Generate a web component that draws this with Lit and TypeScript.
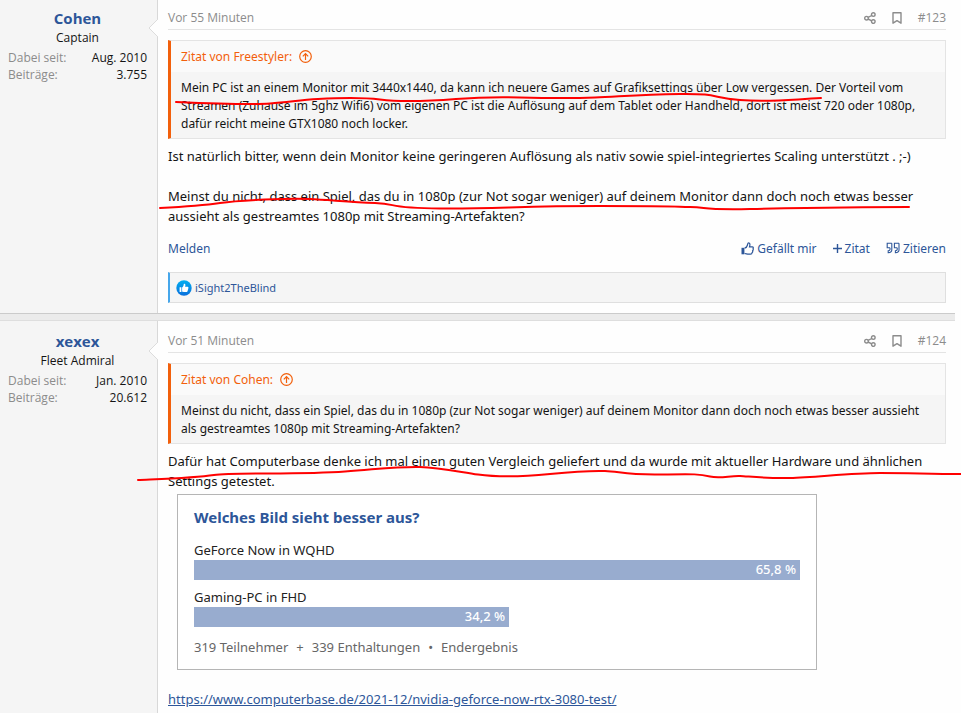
import { LitElement, html, css, svg, nothing, TemplateResult } from "lit";
import { customElement, property } from "lit/decorators.js";

const shareIcon = html`<svg class="icon" viewBox="0 0 12 12" width="12" height="12" fill="none" stroke="currentColor" stroke-width="1.4">
  <circle cx="2.5" cy="6.2" r="1.8" /><circle cx="9.3" cy="2.6" r="1.8" /><circle cx="9.3" cy="9.6" r="1.8" />
  <path d="M4.1 5.4 7.7 3.5M4.1 7 7.7 8.8" />
</svg>`;

const bookmarkIcon = html`<svg class="icon" viewBox="0 0 10 12" width="10" height="12" fill="none" stroke="currentColor" stroke-width="1.4">
  <path d="M1 .7H9V11.200L5 8.600 1 11.200Z" stroke-linejoin="round" />
</svg>`;

const jumpIcon = html`<svg class="icon" viewBox="0 0 13 13" width="13" height="13" fill="none" stroke="currentColor" stroke-width="1.2">
  <circle cx="6.5" cy="6.5" r="5.8" /><path d="M6.5 10V3.6M3.8 6.3 6.5 3.6 9.2 6.3" />
</svg>`;

const thumbIcon = html`<svg class="icon" viewBox="0 0 13 13" width="13" height="13">
  <path d="M.5 5.8H3.4V12.3H.5Z" fill="currentColor" />
  <path d="M3.6 6.2C5 5.9 6.2 4.2 6.5 3 6.7 2 6.7 .8 7.6 .8 9 .8 9.2 2.5 8.5 4.9H11.300C12.500 4.900 12.500 6.200 12 6.800 12.400 7.600 12.200 8.400 11.600 8.800 11.900 9.600 11.600 10.300 11 10.700 11 11.800 10.500 12.200 9.500 12.200H7.600C6 12.200 5 11.500 3.600 11.500" fill="none" stroke="currentColor" stroke-width="1.2" />
</svg>`;

const plusIcon = html`<svg class="icon" viewBox="0 0 9 9" width="9" height="9" fill="none" stroke="currentColor" stroke-width="1.4">
  <path d="M4.5 0V9M0 4.5H9" />
</svg>`;

const quoteIcon = html`<svg class="icon" viewBox="0 0 14 12" width="14" height="12" fill="none" stroke="currentColor" stroke-width="1.1">
  <path d="M5.8 1.2H1.2V5.8H4M5.8 1.2V8C5.8 9.8 4.8 10.5 2.2 10.7V8.8C3.6 8.7 4 8.5 4 7.5V5.8" />
  <path d="M13 1.2H8.4V5.8H11.2M13 1.2V8C13 9.8 12 10.5 9.4 10.7V8.8C10.8 8.7 11.2 8.5 11.2 7.5V5.8" />
</svg>`;

const reactionIcon = html`<svg class="icon" viewBox="0 0 16 16" width="16" height="16">
  <defs><linearGradient id="like" x1="0" y1="0" x2="0" y2="1"><stop offset="0" stop-color="#00aef0" /><stop offset="1" stop-color="#0a6fdc" /></linearGradient></defs>
  <circle cx="8" cy="8" r="7.7" fill="url(#like)" />
  <path d="M3.6 7.3H5.4V11.9H3.6ZM6.1 7.5C7.4 6.6 7.6 5.6 7.7 4.2 7.8 3.3 9.4 3.5 9.4 5 9.4 5.8 9.2 6.3 9.1 6.7H11.6C12.6 6.7 12.7 7.7 12.1 8.1 12.6 8.6 12.4 9.3 11.9 9.5 12.2 10.1 11.9 10.6 11.5 10.8 11.6 11.6 11.2 12 10.4 12H8.2C7.2 12 6.8 11.7 6.1 11.5Z" fill="#fff" />
</svg>`;

interface Post {
  user: string;
  rank: string;
  joined: string;
  messages: string;
  time: string;
  number: string;
  quoteAuthor: string;
  quote: TemplateResult;
  body: TemplateResult;
  likedBy?: string;
}

const posts: Post[] = [
  {
    user: "Cohen",
    rank: "Captain",
    joined: "Aug. 2010",
    messages: "3.755",
    time: "Vor 55 Minuten",
    number: "#123",
    quoteAuthor: "Freestyler",
    quote: html`Mein PC ist an einem Monitor mit 3440x1440, da kann ich neuere Games auf Grafiksettings über Low vergessen. Der Vorteil vom<br />Streamen (Zuhause im 5ghz Wifi6) vom eigenen PC ist die Auflösung auf dem Tablet oder Handheld, dort ist meist 720 oder 1080p,<br />dafür reicht meine GTX1080 noch locker.`,
    body: html`Ist natürlich bitter, wenn dein Monitor keine geringeren Auflösung als nativ sowie spiel-integriertes Scaling unterstützt . ;-)<br /><br />Meinst du nicht, dass ein Spiel, das du in 1080p (zur Not sogar weniger) auf deinem Monitor dann doch noch etwas besser<br />aussieht als gestreamtes 1080p mit Streaming-Artefakten?`,
    likedBy: "iSight2TheBlind",
  },
  {
    user: "xexex",
    rank: "Fleet Admiral",
    joined: "Jan. 2010",
    messages: "20.612",
    time: "Vor 51 Minuten",
    number: "#124",
    quoteAuthor: "Cohen",
    quote: html`Meinst du nicht, dass ein Spiel, das du in 1080p (zur Not sogar weniger) auf deinem Monitor dann doch noch etwas besser aussieht<br />als gestreamtes 1080p mit Streaming-Artefakten?`,
    body: html`Dafür hat Computerbase denke ich mal einen guten Vergleich geliefert und da wurde mit aktueller Hardware und ähnlichen<br />Settings getestet.`,
  },
];

@customElement("poll-result")
class PollResult extends LitElement {
  static styles = css`
    :host {
      display: block;
      box-sizing: border-box;
      max-width: 640px;
      margin: 3px 0 0 9px;
      padding: 11px 16px 12px;
      border: 1px solid #b5b5b5;
      background: #fff;
      font: 13px/20px "Noto Sans", "Open Sans", sans-serif;
      color: #222;
    }
    .title { margin: 0 0 12px; font-size: 15px; line-height: 22px; font-weight: 700; color: #2d5699; }
    .option { margin-bottom: 7px; }
    .bar {
      box-sizing: border-box;
      height: 20px;
      line-height: 18px;
      padding-right: 4px;
      background: #98accf;
      color: #fff;
      font-weight: 500;
      text-align: right;
    }
    .summary { display: flex; gap: 8px; margin-top: 10px; color: #666; }
  `;

  private options = [
    { label: "GeForce Now in WQHD", value: "65,8 %", width: 100 },
    { label: "Gaming-PC in FHD", value: "34,2 %", width: 52 },
  ];

  render() {
    return html`<h3 class="title">Welches Bild sieht besser aus?</h3>
      ${this.options.map(
        (o) => html`<div class="option">
          <div class="label">${o.label}</div>
          <div class="bar" style="width:${o.width}%">${o.value}</div>
        </div>`
      )}
      <div class="summary"><span>319 Teilnehmer</span><span>+</span><span>339 Enthaltungen</span><span>•</span><span>Endergebnis</span></div>`;
  }
}

@customElement("forum-post")
class ForumPost extends LitElement {
  @property({ attribute: false }) post!: Post;

  static styles = css`
    :host { display: flex; background: #fefefe; }
    a { color: inherit; text-decoration: none; }
    .icon { flex: none; display: block; }
    .user {
      box-sizing: border-box;
      flex: none;
      width: 158px;
      padding: 9px 10px 0 8px;
      border-right: 1px solid #d8d8d8;
      background: #f5f5f5;
      position: relative;
      font-family: "Open Sans", "Noto Sans", sans-serif;
      font-size: 12px;
      line-height: 16px;
      color: #141414;
    }
    .arrow { position: absolute; right: -1px; top: 20px; }
    .name { display: block; margin: 0 0 2px; font-size: 15px; line-height: 22px; font-weight: 700; text-align: center; color: #2d5699; }
    .rank { text-align: center; line-height: 14px; margin-bottom: 5px; }
    .facts { display: grid; grid-template-columns: auto auto; justify-content: space-between; row-gap: 1px; margin: 0; }
    .facts dt { color: #8c8c8c; }
    .facts dd { margin: 0; text-align: right; }
    .main { flex: 1; min-width: 0; padding: 8px 9px 10px 10px; }
    .head {
      display: flex;
      align-items: center;
      gap: 16px;
      height: 23px;
      border-bottom: 1px solid #e4e4e4;
      font-family: "Open Sans", "Noto Sans", sans-serif;
      font-size: 12px;
      color: #8c8c8c;
    }
    .time { flex: 1; }
    .quote { margin: 10px 0 7px; border: 1px solid #e4e4e4; border-left: 3px solid #f2600c; background: #f5f5f5; }
    .quote-title { display: flex; align-items: center; gap: 7px; height: 31px; padding-left: 10px; background: #fafafa; color: #f2600c; font-size: 12px; }
    .quote-text { margin: 0; padding: 7px 0 5px 10px; font-size: 12px; line-height: 18px; white-space: nowrap; }
    .body { font-size: 13px; line-height: 20px; white-space: nowrap; }
    .actions { display: flex; align-items: center; gap: 16px; height: 20px; margin-top: 12px; font-size: 12px; color: #2d5699; }
    .report { flex: 1; }
    button { display: flex; align-items: center; gap: 3px; padding: 0; border: 0; background: none; font: inherit; color: inherit; cursor: pointer; }
    .likes {
      display: flex;
      align-items: center;
      gap: 3px;
      height: 29px;
      margin-top: 14px;
      padding-left: 6px;
      border: 1px solid #dfdfdf;
      border-left: 2px solid #47a7eb;
      background: #f5f5f5;
      font-size: 11px;
      color: #2d5699;
    }
  `;

  render() {
    const p = this.post;
    return html`<aside class="user">
        <svg class="arrow" width="10" height="20" viewBox="0 0 10 20"><path d="M10 1 1 10 10 19" fill="#fefefe" stroke="#dcdcdc" /></svg>
        <h4 class="name"><a href="#">${p.user}</a></h4>
        <div class="rank">${p.rank}</div>
        <dl class="facts">
          <dt>Dabei seit:</dt><dd>${p.joined}</dd>
          <dt>Beiträge:</dt><dd>${p.messages}</dd>
        </dl>
      </aside>
      <div class="main">
        <header class="head">
          <a class="time" href="#">${p.time}</a>
          <a href="#" aria-label="Teilen">${shareIcon}</a>
          <a href="#" aria-label="Lesezeichen">${bookmarkIcon}</a>
          <a href="#">${p.number}</a>
        </header>
        <blockquote class="quote">
          <a class="quote-title" href="#">Zitat von ${p.quoteAuthor}: ${jumpIcon}</a>
          <p class="quote-text">${p.quote}</p>
        </blockquote>
        <div class="body">${p.body}</div>
        <slot></slot>
        ${p.likedBy
          ? html`<div class="actions">
                <span class="report"><a href="#">Melden</a></span>
                <button>${thumbIcon}Gefällt mir</button>
                <button>${plusIcon}Zitat</button>
                <button>${quoteIcon}Zitieren</button>
              </div>
              <div class="likes">${reactionIcon}<a href="#">${p.likedBy}</a></div>`
          : nothing}
      </div>`;
  }
}

const strokes = [
  "M176 102C200 103 250 105 270 103.5S300 100 318 99 360 97 380 99.5 430 101 456 99 500 97 520 97.5 570 98.5 595 97.5 640 94.5 680 94 710 97.5 740 100 790 99.5 821 98",
  "M160 208C180 207 200 206 220 203S290 198 310 199 350 202 375 203 385 208 440 208.5 520 206 600 206 670 206.5 690 207 700 210 750 209 860 207 909 207",
  "M138 480C160 479 195 478 214 475S300 475 345 471.5 400 466.5 420 467 460 472 478 474.5 520 477 550 474 590 470.5 605 471 625 475 660 474.5 700 474 710 476.5 730 475.5 740 476 765 478.5 790 478 850 473 880 473 930 474 961 474",
];

@customElement("app-root")
class AppRoot extends LitElement {
  static styles = css`
    :host {
      display: block;
      position: relative;
      min-height: 100vh;
      overflow: hidden;
      background: #fefefe;
      font-family: "Noto Sans", "Open Sans", sans-serif;
      color: #141414;
    }
    .thread { display: flex; flex-direction: column; min-height: 100vh; margin: -2px 6px 0 0; }
    .last { flex: 1; }
    .divider { box-sizing: border-box; height: 8px; flex: none; background: #ebebeb; border-top: 1px solid #cbcbcb; border-bottom: 1px solid #dedede; }
    .source { display: block; margin-top: 19px; font-size: 13px; line-height: 20px; color: #2d5699; text-decoration: underline; }
    .marker { position: absolute; left: 0; top: 0; pointer-events: none; }
  `;

  render() {
    return html`<main class="thread">
        <forum-post .post=${posts[0]}></forum-post>
        <div class="divider"></div>
        <forum-post class="last" .post=${posts[1]}>
          <poll-result></poll-result>
          <a class="source" href="https://www.computerbase.de/2021-12/nvidia-geforce-now-rtx-3080-test/">https://www.computerbase.de/2021-12/nvidia-geforce-now-rtx-3080-test/</a>
        </forum-post>
      </main>
      <svg class="marker" width="961" height="713" viewBox="0 0 961 713" fill="none" stroke="#f00" stroke-width="2" stroke-linecap="round">
        ${strokes.map((d) => svg`<path d=${d} />`)}
      </svg>`;
  }
}
